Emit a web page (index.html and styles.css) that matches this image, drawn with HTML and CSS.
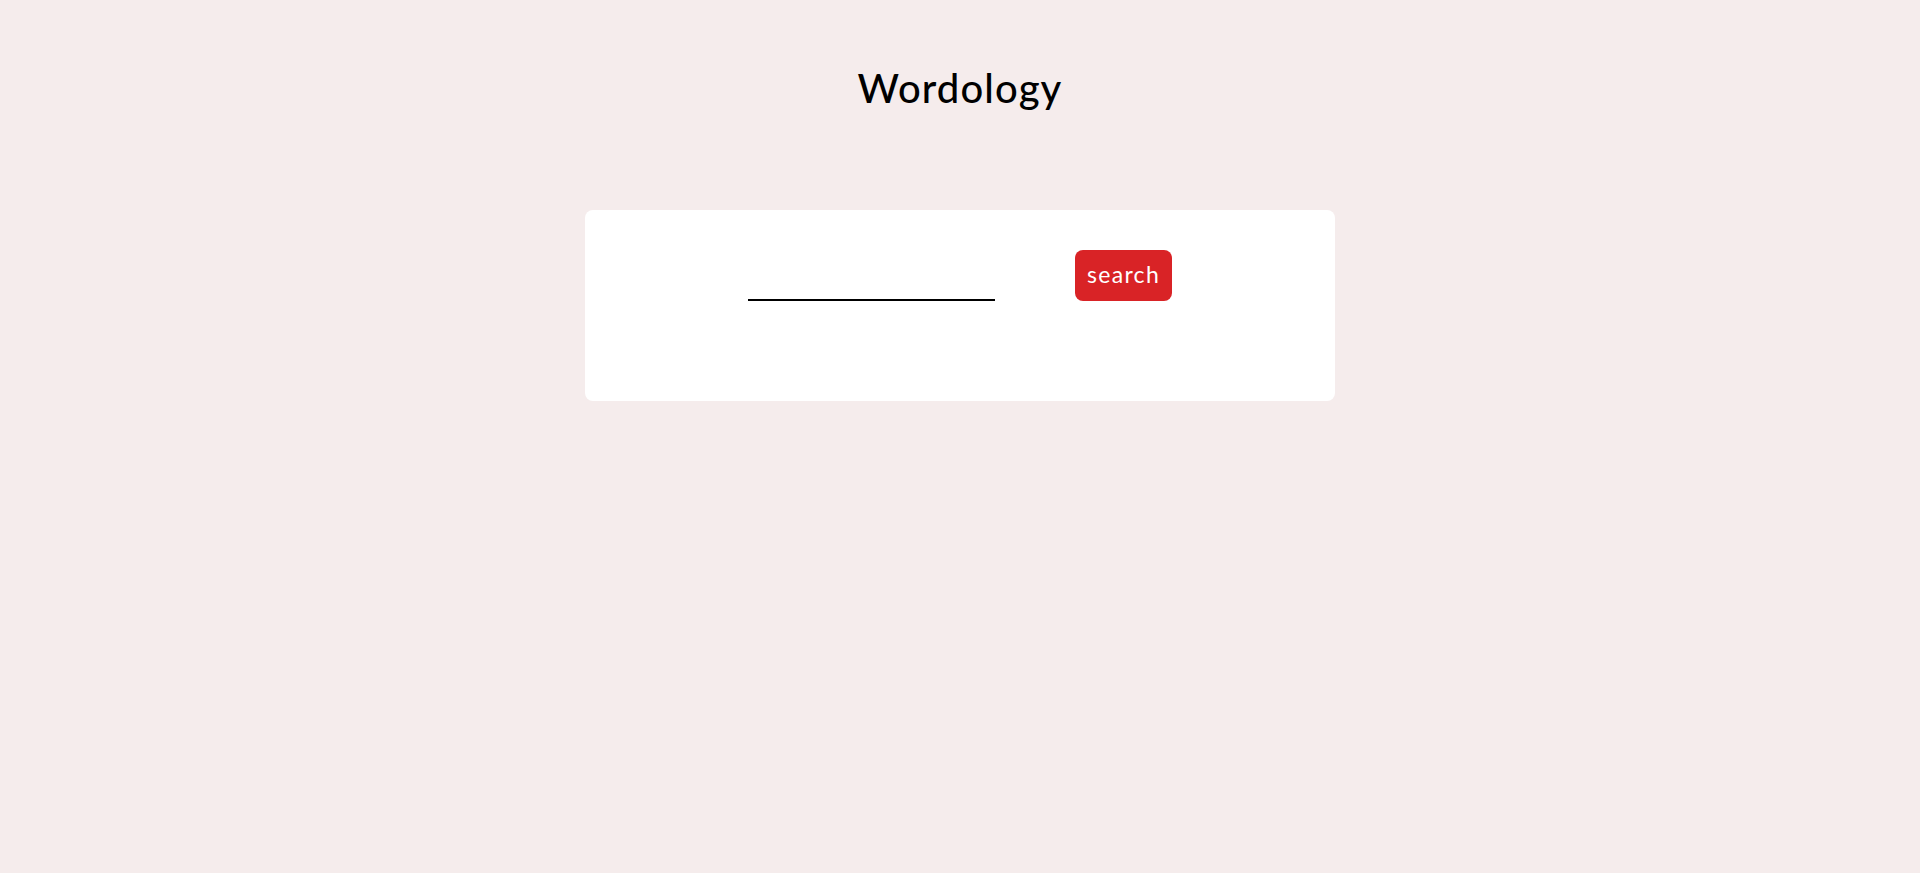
FILE: index.html
```html
<!DOCTYPE html>
<html lang="en">
<head>
<meta charset="utf-8">
<title>Wordology</title>
<link rel="stylesheet" href="styles.css">
</head>
<body>
<header class="header">
  <h1 class="title">Wordology</h1>
</header>
<main class="main">
  <section class="card">
    <form class="search-form" onsubmit="return false;">
      <input class="search-input" type="text" aria-label="word">
      <button class="search-button" type="submit">search</button>
    </form>
    <div class="results"></div>
  </section>
</main>
</body>
</html>
```

FILE: styles.css
```css
* { box-sizing: border-box; }
html, body {
  margin: 0;
  padding: 0;
}
body {
  background: #f5ecec;
  font-family: "Lato", "Noto Sans", sans-serif;
  color: #000;
  min-height: 100vh;
}
.header {
  display: flex;
  justify-content: center;
  padding-top: 60px;
}
.title {
  margin: 0;
  font-size: 40px;
  font-weight: 500;
  line-height: 56px;
  letter-spacing: 1.1px;
}
.main {
  display: flex;
  justify-content: center;
  padding-top: 94px;
}
.card {
  width: 750px;
  height: 191px;
  background: #ffffff;
  border-radius: 8px;
  padding-top: 40px;
}
.search-form {
  display: flex;
  justify-content: center;
  align-items: flex-end;
  gap: 80px;
}
.search-input {
  width: 247px;
  height: 40px;
  border: none;
  border-bottom: 2px solid #000;
  outline: none;
  background: transparent;
  font-family: inherit;
  font-size: 20px;
  padding: 0 4px;
}
.search-button {
  width: 97px;
  height: 51px;
  border: none;
  border-radius: 8px;
  background: #d92326;
  color: #fff;
  font-family: inherit;
  font-size: 23px;
  letter-spacing: 1.3px;
  padding: 0 0 4px;
  cursor: pointer;
}
```
